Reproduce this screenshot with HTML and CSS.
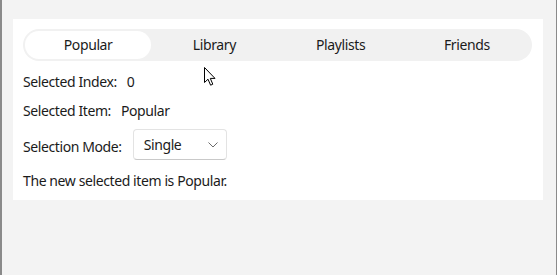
FILE: index.html
```html
<!DOCTYPE html>
<html>
<head>
<meta charset="utf-8">
<link rel="stylesheet" href="styles.css">
</head>
<body>
<div class="window">
  <div class="panel">
    <div class="segmented">
      <div class="seg seg-selected">Popular</div>
      <div class="seg">Library</div>
      <div class="seg">Playlists</div>
      <div class="seg">Friends</div>
    </div>
    <div class="row row-first"><span>Selected Index:</span><span>0</span></div>
    <div class="row row-second"><span>Selected Item:</span><span>Popular</span></div>
    <div class="row row-mode">
      <span class="mode-label">Selection Mode:</span>
      <div class="combo">
        <span>Single</span>
        <svg class="chev" width="10" height="6" viewBox="0 0 10 6"><path d="M0.5 0.5 L5 5 L9.5 0.5" fill="none" stroke="#6b6b6b" stroke-width="1"/></svg>
      </div>
    </div>
    <div class="row row-last">The new selected item is Popular.</div>
  </div>
  <svg class="cursor" width="13" height="20" viewBox="0 0 13 20"><path d="M0.5 0.5 L0.5 15.5 L4 12.2 L6.6 18.2 L8.8 17.2 L6.3 11.4 L11 11.4 Z" fill="#fff" stroke="#000" stroke-width="1" stroke-linejoin="round"/></svg>
</div>
</body>
</html>
```
FILE: styles.css
```css
html, body {
  margin: 0;
  padding: 0;
  background: #f3f3f3;
}
body {
  font-family: "Noto Sans", "Open Sans", sans-serif;
  font-size: 14px;
  letter-spacing: -0.4px;
  color: #1b1b1b;
}
.window {
  position: relative;
  box-sizing: border-box;
  height: 275px;
  width: 557px;
  border-left: 2px solid #8a8a8a;
  border-right: 1px solid #8a8a8a;
  padding: 19px 13px 0 11px;
}
.panel {
  background: #ffffff;
  height: 181px;
  box-sizing: border-box;
  padding: 10px 11px 0 10px;
}
.segmented {
  display: grid;
  grid-template-columns: repeat(4, 1fr);
  height: 32px;
  box-sizing: border-box;
  padding: 2px;
  border-radius: 16px;
  background: #f1f1f1;
}
.seg {
  display: flex;
  align-items: center;
  justify-content: center;
  border-radius: 14px;
  line-height: 20px;
}
.seg-selected {
  background: #ffffff;
}
.row {
  display: flex;
  align-items: center;
  gap: 10px;
  line-height: 20px;
}
.row-first {
  margin-top: 11px;
}
.row-second {
  margin-top: 9px;
}
.row-mode {
  margin-top: 8px;
  gap: 11px;
}
.mode-label {
  margin-top: 4px;
}
.combo {
  box-sizing: border-box;
  width: 94px;
  height: 31px;
  border: 1px solid #e3e3e3;
  border-bottom-color: #c9c9c9;
  border-radius: 4px;
  background: #ffffff;
  display: flex;
  align-items: center;
  justify-content: space-between;
  padding: 0 8px 0 10px;
}
.chev {
  display: block;
}
.row-last {
  margin-top: 11px;
}
.cursor {
  position: absolute;
  left: 202px;
  top: 67px;
}
```
